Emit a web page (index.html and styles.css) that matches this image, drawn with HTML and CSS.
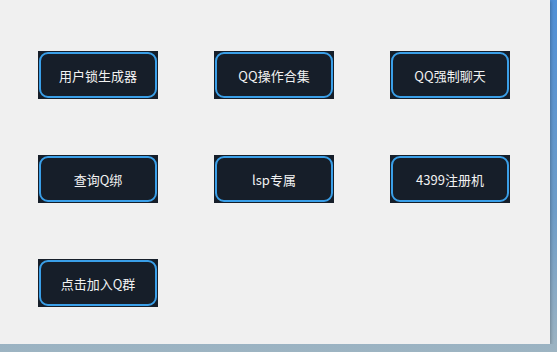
FILE: index.html
```html
<!DOCTYPE html>
<html>
<head>
	<title>工具箱</title>
	<link rel="stylesheet" href="styles.css">
</head>
<body>
	<div class="window">
		<div class="grid">
			<div class="btn"><span>用户锁生成器</span></div>
			<div class="btn"><span>QQ操作合集</span></div>
			<div class="btn"><span>QQ强制聊天</span></div>
			<div class="btn"><span>查询Q绑</span></div>
			<div class="btn"><span>lsp专属</span></div>
			<div class="btn"><span>4399注册机</span></div>
			<div class="btn"><span>点击加入Q群</span></div>
		</div>
	</div>
</body>
</html>
```
FILE: styles.css
```css
html {
	background: linear-gradient(180deg, #4f8fd6 0%, #6d9cc8 60%, #9db4c2 100%);
	height: 100%;
}
body {
	margin: 0;
	font-family: "Noto Sans CJK SC", "Noto Sans", sans-serif;
}
.window {
	width: 550px;
	height: 344px;
	box-sizing: border-box;
	background-color: #f0f0f0;
	padding: 51px 0 0 38px;
	box-shadow: 1px 1px 3px rgba(0, 0, 0, 0.25);
}
.grid {
	display: grid;
	grid-template-columns: repeat(3, 120px);
	grid-auto-rows: 48px;
	column-gap: 56px;
	row-gap: 56px;
}
.btn {
	background-color: #161e29;
	padding: 1px;
	display: flex;
}
.btn span {
	flex: 1;
	border: 2px solid #3a9fe8;
	border-radius: 9px;
	display: flex;
	align-items: center;
	justify-content: center;
	color: #f2f2f2;
	font-size: 13px;
}
```
